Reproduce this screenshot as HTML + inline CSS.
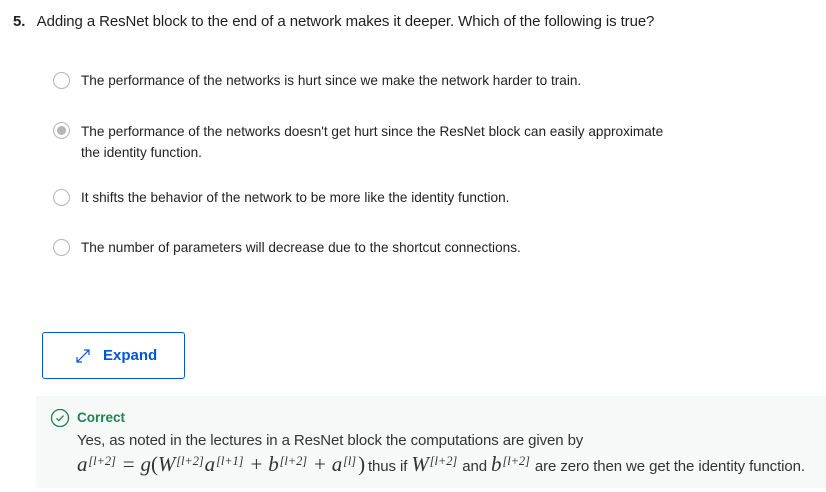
<!DOCTYPE html>
<html><head><meta charset="utf-8"><style>
body{margin:0;width:826px;height:492px;background:#fff;font-family:"Liberation Sans",sans-serif;color:#1f1f1f;position:relative;overflow:hidden}
.a{position:absolute;white-space:nowrap}
.q{font-size:15px;letter-spacing:-0.1px}
.o{font-size:13.6px;letter-spacing:0px;color:#222}
.r{position:absolute;width:17px;height:17px;border:1.5px solid #b5b5b5;border-radius:50%;box-sizing:border-box}
.r.s::after{content:"";position:absolute;left:2.5px;top:2.5px;width:9px;height:9px;border-radius:50%;background:#b5b5b5}
.btn{position:absolute;left:42px;top:332px;width:143px;height:47px;border:1px solid #0056d2;border-radius:3px;box-sizing:border-box}
.box{position:absolute;left:36px;top:396px;width:790px;height:92px;background:#f6f9f7}
.m{font-family:"Liberation Serif",serif;font-style:italic;font-size:21px}
.n{font-family:"Liberation Serif",serif;font-size:21px;margin:0 6px}
sup{font-size:12.5px;font-style:italic;font-family:"Liberation Serif",serif;margin-left:1px;margin-right:1px}
</style></head><body>
<div class="a q" style="left:13px;top:13px"><b>5.</b>&nbsp;&nbsp; Adding a ResNet block to the end of a network makes it deeper. Which of the following is true?</div>

<div class="r" style="left:53px;top:72px"></div>
<div class="a o" style="left:81px;top:73px">The performance of the networks is hurt since we make the network harder to train.</div>

<div class="r s" style="left:53px;top:122px"></div>
<div class="a o" style="left:81px;top:121px;line-height:21px">The performance of the networks doesn't get hurt since the ResNet block can easily approximate<br>the identity function.</div>

<div class="r" style="left:53px;top:189px"></div>
<div class="a o" style="left:81px;top:190px">It shifts the behavior of the network to be more like the identity function.</div>

<div class="r" style="left:53px;top:239px"></div>
<div class="a o" style="left:81px;top:240px">The number of parameters will decrease due to the shortcut connections.</div>

<div class="btn">
<svg style="position:absolute;left:32px;top:15px" width="16" height="16" viewBox="0 0 16 16" fill="none" stroke="#0056d2" stroke-width="1.2"><path d="M2 14L14 2M9 2h5v5M2 9v5h5"/></svg>
<div class="a" style="left:60px;top:14px;font-size:15px;font-weight:bold;color:#0056d2">Expand</div>
</div>

<div class="box">
<svg style="position:absolute;left:14px;top:12px" width="20" height="20" viewBox="0 0 20 20" fill="none" stroke="#1f8354" stroke-width="1.3"><circle cx="10" cy="10" r="8.5"/><path d="M6.5 10.3l2.3 2.3 4.7-5"/></svg>
<div class="a" style="left:41px;top:14px;font-size:13.5px;font-weight:bold;color:#1f8354">Correct</div>
<div class="a" style="left:41px;top:36px;font-size:15px;letter-spacing:-0.1px;color:#333">Yes, as noted in the lectures in a ResNet block the computations are given by</div>
<div class="a" style="left:41px;top:56px;font-size:15px;letter-spacing:-0.1px;color:#333"><span class="m">a</span><sup>[l+2]</sup><span class="n">=</span><span class="m">g</span><span class="n" style="margin:0">(</span><span class="m">W</span><sup>[l+2]</sup><span class="m">a</span><sup>[l+1]</sup><span class="n">+</span><span class="m">b</span><sup>[l+2]</sup><span class="n">+</span><span class="m">a</span><sup>[l]</sup><span class="n" style="margin:0 3px 0 1px">)</span>thus if <span class="m">W</span><sup>[l+2]</sup> and <span class="m">b</span><sup>[l+2]</sup> are zero then we get the identity function.</div>
</div>
</body></html>
